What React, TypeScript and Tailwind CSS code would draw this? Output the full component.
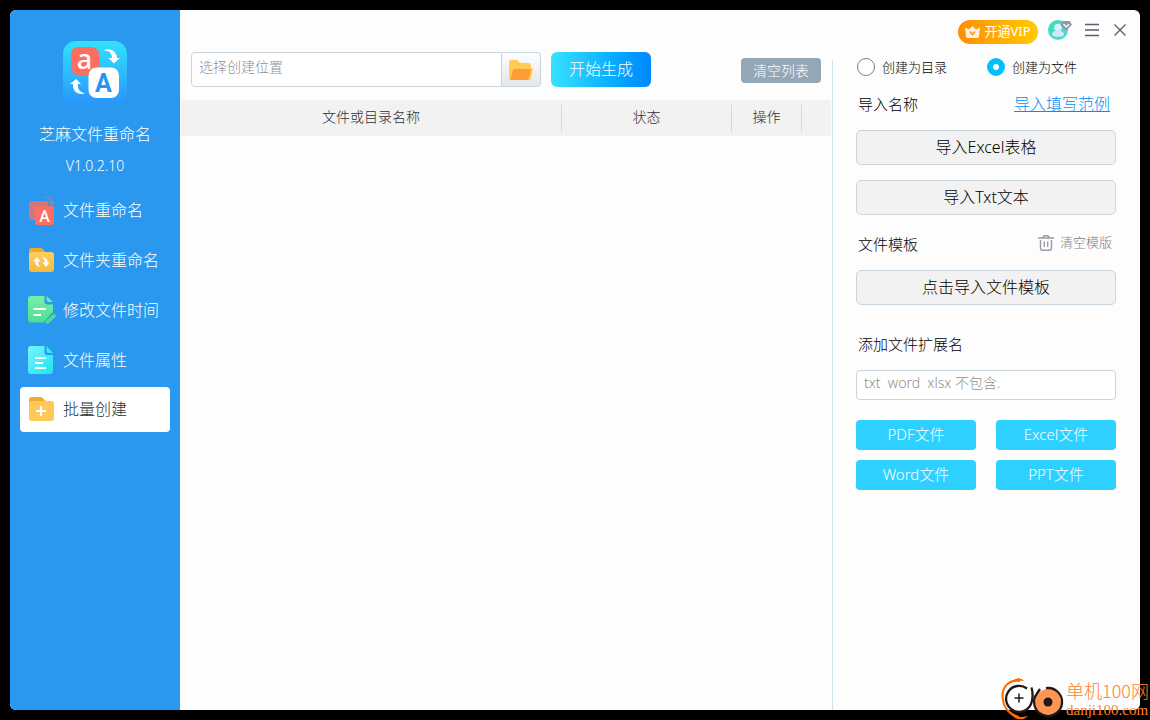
import { useState, type ReactNode } from "react";

function AppLogo() {
  return (
    <svg width="64" height="64" viewBox="0 0 64 64" aria-hidden="true">
      <defs>
        <linearGradient id="logoBg" x1="0" y1="0" x2="0" y2="1">
          <stop offset="0" stopColor="#33e1ff" />
          <stop offset="1" stopColor="#2995fd" />
        </linearGradient>
      </defs>
      <rect width="64" height="64" rx="13" fill="url(#logoBg)" />
      <rect x="8" y="6" width="28" height="28" rx="7" fill="#fd6e5e" />
      <text x="21.500" y="27.500" textAnchor="middle" fontSize="27" fontWeight="500" fontFamily="Noto Sans, sans-serif" fill="#fff">a</text>
      <rect x="25.500" y="26.500" width="30.500" height="30.500" rx="8" fill="#fff" />
      <text x="40.500" y="50.500" textAnchor="middle" fontSize="25" fontWeight="700" fontFamily="Roboto, sans-serif" fill="#2b95ec">A</text>
      <path d="M40.500 9.500C46 6.500 53.500 9 54 17h2.800L51 22.500 45.500 17H49c0-5-3-8-8.500-7.500Z" fill="#fff" />
      <path d="M22 52.200C15.500 54.500 9.500 51 10 43H7l6.200-5L18 43h-3.200c-.3 5 2.200 8.500 7.200 9.200Z" fill="#fff" />
    </svg>
  );
}

function RenameIcon() {
  return (
    <svg width="28" height="30" viewBox="0 0 28 30" aria-hidden="true">
      <rect x="1" y="6" width="19" height="19" rx="2" fill="#d2757f" />
      <path d="M14 3.500C18-.5 24.500 1.500 25 7h2l-3.500 4L20 7h2.500C22 3 18 2 14 3.500Z" fill="#8588ad" />
      <rect x="7" y="11" width="19" height="19" rx="2" fill="#fd6e5e" />
      <text x="16.500" y="26.500" textAnchor="middle" fontSize="16" fontWeight="500" fontFamily="Roboto, sans-serif" fill="#fff">A</text>
    </svg>
  );
}

function FolderRenameIcon() {
  return (
    <svg width="28" height="26" viewBox="0 0 28 26" aria-hidden="true">
      <defs>
        <linearGradient id="folderBg" x1="0" y1="0" x2="0" y2="1">
          <stop offset="0" stopColor="#ffcd60" />
          <stop offset="1" stopColor="#f6b93b" />
        </linearGradient>
      </defs>
      <path d="M1 8V3.500A2.500 2.500 0 0 1 3.500 1h9c3 0 3.500 4 6 4v4Z" fill="#f0a92b" />
      <rect x="1" y="5" width="25" height="20" rx="3" fill="url(#folderBg)" />
      <path d="M12.500 20C8.500 19.500 7 17.500 7.300 14.500H5l4-4.500 3.500 4.500h-2.400c0 2.500.6 4 2.400 5.500ZM14 10c4 .5 5.700 2.500 5.500 5.500h2.200L18 20l-3.700-4.500h2.400c0-2.500-.9-4-2.700-5.500Z" fill="#fff" />
    </svg>
  );
}

function TimeIcon() {
  return (
    <svg width="30" height="30" viewBox="0 0 30 30" aria-hidden="true">
      <defs>
        <linearGradient id="timeBg" x1="0" y1="0" x2="0" y2="1">
          <stop offset="0" stopColor="#78efae" />
          <stop offset="1" stopColor="#4cde93" />
        </linearGradient>
      </defs>
      <path d="M3 1h13.500v5.500a3 3 0 0 0 3 3H25V17l-9.500 10.500H3a3 3 0 0 1-3-3V4a3 3 0 0 1 3-3Z" fill="url(#timeBg)" />
      <path d="M18.500 1 25 7h-4.500a2 2 0 0 1-2-2Z" fill="#6ceaa6" />
      <path d="m18 25.500 8-7 2.500 2.500-8 7.500h-3Z" fill="#4ddc90" />
      <path d="M5.500 14H18M5.500 20H13" stroke="#fff" strokeWidth="2" />
    </svg>
  );
}

function PropertyIcon() {
  return (
    <svg width="28" height="30" viewBox="0 0 28 30" aria-hidden="true">
      <defs>
        <linearGradient id="propBg" x1="0" y1="0" x2="1" y2="1">
          <stop offset="0" stopColor="#7df1ff" />
          <stop offset="1" stopColor="#1ae5f2" />
        </linearGradient>
      </defs>
      <path d="M3 1h13.500v6a3 3 0 0 0 3 3H25v16a3 3 0 0 1-3 3H3a3 3 0 0 1-3-3V4a3 3 0 0 1 3-3Z" fill="url(#propBg)" />
      <path d="M18.500 1 25 8h-4.500a2 2 0 0 1-2-2Z" fill="#3ce9f8" />
      <path d="M7 13h11M7 18h8M7 23h11" stroke="#fff" strokeWidth="2" />
    </svg>
  );
}

function CreateIcon() {
  return (
    <svg width="28" height="26" viewBox="0 0 28 26" aria-hidden="true">
      <path d="M1 8V3.500A2.500 2.500 0 0 1 3.500 1h9c3 0 3.500 4 6 4v4Z" fill="#eeab2e" />
      <rect x="1" y="5" width="25" height="20" rx="3" fill="#ffc957" />
      <path d="M13 10v10M8 15h10" stroke="#fff" strokeWidth="2.200" />
    </svg>
  );
}

function OpenFolderIcon() {
  return (
    <svg width="24" height="22" viewBox="0 0 24 22" aria-hidden="true">
      <path d="M0 3.500A2.500 2.500 0 0 1 2.500 1h5c2 0 2 3 4.500 3h7a3 3 0 0 1 3 3v12a2 2 0 0 1-2 2H2a2 2 0 0 1-2-2Z" fill="#ffca55" />
      <path d="M20 9h2.500c1.200 0 1.600 1 1.300 2L21 20Z" fill="#ffca55" />
      <path d="M6 10h14.500c1.200 0 1.700.9 1.400 2l-2.300 7.500c-.3 1-1 1.500-2 1.500H3c-1.500 0-1.800-.8-1.400-2L4 11.500C4.400 10.500 5 10 6 10Z" fill="#ff9c33" />
    </svg>
  );
}

function CrownIcon() {
  return (
    <svg width="15" height="12" viewBox="0 0 15 12" aria-hidden="true">
      <path d="M0 1.500 4 3.500 7.500 0 11 3.500l4-2-1 9c-.1 1-.5 1.500-1.500 1.500h-10C1.500 12 1.100 11.500 1 10.500Z" fill="#ffeeda" />
      <path d="m5 5.500 2.500 3 2.500-3" fill="none" stroke="#ff9a0b" strokeWidth="1.500" />
    </svg>
  );
}

function AvatarIcon() {
  return (
    <svg width="24" height="20" viewBox="0 0 24 20" aria-hidden="true">
      <defs>
        <linearGradient id="avatarBg" x1="0" y1="0" x2="1" y2="1">
          <stop offset="0" stopColor="#36dfae" />
          <stop offset="1" stopColor="#56d8d8" />
        </linearGradient>
      </defs>
      <circle cx="10" cy="10" r="10" fill="url(#avatarBg)" />
      <circle cx="10" cy="7.500" r="3.800" fill="#d9effc" />
      <path d="M4 15c0-3 2-4.500 6-4.500s6 1.500 6 4.500c-2 2.500-10 2.500-12 0Z" fill="#d0e6fb" />
      <path d="M14.500 1h7L24 4.500 18.200 11 12.500 4.500Z" fill="#9295a8" />
      <path d="m15.500 4 2.800 3 2.800-3" fill="none" stroke="#fff" strokeWidth="1.300" />
    </svg>
  );
}

function TrashIcon() {
  return (
    <svg width="16" height="16" viewBox="0 0 16 16" fill="none" stroke="#9a9ca5" strokeWidth="1.400" aria-hidden="true">
      <path d="M0 3h16M4.800 3c.2-1.500 1-2.300 2-2.300h2.400c1 0 1.800.8 2 2.300M2.500 5v8c0 1.500.8 2.300 2 2.300h7c1.200 0 2-.8 2-2.300V5M6.300 6.500v5.500M9.700 6.500v5.500" />
    </svg>
  );
}

function SiteMark() {
  return (
    <div className="pointer-events-none absolute right-0 bottom-0 flex items-start">
      <svg width="65" height="42" viewBox="0 0 65 42" fill="none" aria-hidden="true">
        <circle cx="19" cy="20" r="13.500" fill="#fff" />
        <path d="M20 3C7 1 1 11 3 22c1 8 7 15 16 17" stroke="#ff6a00" strokeWidth="2" />
        <path d="M8 7C13-1 21-1 24 3c-6-1-11 0-16 4ZM9 34c4 5 11 6 19 4-5 5-13 5-19-4Z" fill="#ff6a00" />
        <path d="M27 10.500A13 13 0 1 0 31 26C33 22 33 14 31.500 9.500" stroke="#231815" strokeWidth="2.300" />
        <path d="M14.500 20h9M19 15.500v9" stroke="#231815" strokeWidth="1.500" />
        <circle cx="48" cy="24" r="13" fill="#ff9552" />
        <circle cx="48" cy="24" r="4.500" fill="#231815" />
        <path d="M46 10.200A14 14 0 1 1 37 15.500l3-4.500" stroke="#231815" strokeWidth="2.300" />
      </svg>
      <div className="flex w-[85px] flex-col pl-px text-[#ff8330]">
        <span className="font-['Noto_Sans_CJK_SC',sans-serif] text-lg leading-6 whitespace-nowrap">单机100网</span>
        <span className="font-['Liberation_Serif',serif] text-[15px] leading-[16px]">danji100.com</span>
      </div>
    </div>
  );
}

const navItems: { label: string; icon: ReactNode }[] = [
  { label: "文件重命名", icon: <RenameIcon /> },
  { label: "文件夹重命名", icon: <FolderRenameIcon /> },
  { label: "修改文件时间", icon: <TimeIcon /> },
  { label: "文件属性", icon: <PropertyIcon /> },
  { label: "批量创建", icon: <CreateIcon /> },
];

function Sidebar() {
  const [active, setActive] = useState("批量创建");
  return (
    <aside className="flex w-[170px] shrink-0 flex-col items-center bg-[#2b98ef] pt-[31px] text-white">
      <AppLogo />
      <h1 className="mt-[17px] text-base leading-6">芝麻文件重命名</h1>
      <p className="mt-2 text-sm leading-6">V1.0.2.10</p>
      <nav className="mt-[9px] flex w-full flex-col gap-[5px] px-[10px]">
        {navItems.map((item) => (
          <button
            key={item.label}
            type="button"
            onClick={() => setActive(item.label)}
            className={
              item.label === active
                ? "flex h-[45px] items-center rounded bg-white pb-[2px] pl-2 text-base text-[#2c2f36]"
                : "flex h-[45px] items-center rounded pl-2 text-base text-white"
            }
          >
            <span className="flex w-[35px] shrink-0 items-center">{item.icon}</span>
            {item.label}
          </button>
        ))}
      </nav>
    </aside>
  );
}

function TitleBar() {
  return (
    <header className="flex h-10 shrink-0 items-center justify-end pr-[14px]">
      <button type="button" className="mt-1 flex h-6 w-20 items-center justify-center gap-1 rounded-full bg-linear-to-r from-[#ff8c05] to-[#ffcb00] text-[13px] font-normal whitespace-nowrap text-white">
        <CrownIcon />
        开通VIP
      </button>
      <button type="button" aria-label="用户" className="ml-[10px]">
        <AvatarIcon />
      </button>
      <button type="button" aria-label="菜单" className="ml-[13px]">
        <svg width="14" height="14" viewBox="0 0 14 14" stroke="#5b5e6b" strokeWidth="1.300" aria-hidden="true">
          <path d="M0 1.500h14M0 7h14M0 12.500h14" />
        </svg>
      </button>
      <button type="button" aria-label="关闭" className="ml-[15px]">
        <svg width="12" height="12" viewBox="0 0 12 12" stroke="#5b5e6b" strokeWidth="1.300" aria-hidden="true">
          <path d="m.5.500 11 11M11.500.500l-11 11" />
        </svg>
      </button>
    </header>
  );
}

function HeadCell({ label, width }: { label: string; width: string }) {
  return (
    <th className={`${width} p-0 font-light`}>
      <span className="flex h-[27px] items-center justify-center border-r border-[#d5d7da] pb-[2px]">{label}</span>
    </th>
  );
}

function FileList() {
  return (
    <section className="flex min-w-0 flex-1 flex-col pt-[2px]">
      <div className="flex items-center pr-[11px] pl-[11px]">
        <input
          type="text"
          aria-label="选择创建位置"
          placeholder="选择创建位置"
          className="h-[35px] min-w-0 flex-1 rounded-l border border-[#c8d5de] bg-white px-[7px] pb-[6px] text-sm text-[#333] outline-none placeholder:text-[#909090]"
        />
        <button type="button" aria-label="浏览" className="flex h-[35px] w-[39px] items-center justify-center rounded-r border border-l-0 border-[#c8d5de] bg-linear-to-b from-[#fdfdfd] to-[#e4e6e8]">
          <OpenFolderIcon />
        </button>
        <button type="button" className="ml-[10px] h-[35px] w-[100px] rounded-md bg-linear-to-r from-[#36e2ff] to-[#0088ff] pb-px text-base text-white">
          开始生成
        </button>
        <button type="button" className="mt-[2px] ml-[90px] h-[25px] w-20 rounded bg-[#94a7b7] text-sm text-white">
          清空列表
        </button>
      </div>
      <div className="mt-[13px] px-px">
        <table className="w-full table-fixed border-collapse bg-[#f2f2f2] text-sm text-[#2c2f36]">
          <thead>
            <tr className="h-9">
              <HeadCell label="文件或目录名称" width="w-auto" />
              <HeadCell label="状态" width="w-[170px]" />
              <HeadCell label="操作" width="w-[70px]" />
              <th className="w-[29px] p-0" aria-label="滚动条" />
            </tr>
          </thead>
          <tbody />
        </table>
      </div>
    </section>
  );
}

const wideButton = "h-[35px] w-full rounded-[5px] border border-[#c8d5de] bg-[#f2f2f2] pb-px text-base text-black";
const radioInput =
  "m-0 size-[18px] shrink-0 appearance-none rounded-full border border-[#7c7f92] bg-white checked:border-[6px] checked:border-[#00bfff]";

function OptionsPanel() {
  const [kind, setKind] = useState("file");
  const [extension, setExtension] = useState("");
  const types = [
    { label: "PDF文件", value: "pdf" },
    { label: "Excel文件", value: "xlsx" },
    { label: "Word文件", value: "docx" },
    { label: "PPT文件", value: "pptx" },
  ];
  return (
    <section className="mt-[10px] w-[308px] shrink-0 border-l border-[#cfe3ec] pr-6 pl-[23px] text-[15px] text-black">
      <div className="grid h-[14px] grid-cols-2 grid-rows-1 items-center text-[13px]">
        <label className="flex items-center gap-[7px] pl-px leading-[18px]">
          <input type="radio" name="kind" checked={kind === "dir"} onChange={() => setKind("dir")} className={radioInput} />
          创建为目录
        </label>
        <label className="flex items-center gap-[7px] pl-px leading-[18px]">
          <input type="radio" name="kind" checked={kind === "file"} onChange={() => setKind("file")} className={radioInput} />
          创建为文件
        </label>
      </div>
      <div className="mt-[18px] flex h-6 items-center justify-between pr-[6px] pl-[2px]">
        <span>导入名称</span>
        <a href="#example" className="text-base text-[#0090f5] underline">导入填写范例</a>
      </div>
      <button type="button" className={`${wideButton} mt-[14px]`}>导入Excel表格</button>
      <button type="button" className={`${wideButton} mt-[15px]`}>导入Txt文本</button>
      <div className="mt-[17px] flex h-6 items-center justify-between pr-1 pl-[2px]">
        <span>文件模板</span>
        <button type="button" className="flex items-center gap-[6px] pb-[2px] text-[13px] text-[#7c7e88]">
          <TrashIcon />
          清空模版
        </button>
      </div>
      <button type="button" className={`${wideButton} mt-[14px]`}>点击导入文件模板</button>
      <label htmlFor="extension" className="mt-[27px] flex h-6 items-center pl-[2px]">添加文件扩展名</label>
      <input
        id="extension"
        type="text"
        value={extension}
        onChange={(e) => setExtension(e.target.value)}
        placeholder="txt  word  xlsx 不包含."
        className="mt-[14px] h-[30px] w-full rounded border border-[#c8d5de] bg-white px-[7px] pb-[6px] text-sm outline-none placeholder:whitespace-pre placeholder:text-[#909090]"
      />
      <div className="mt-5 grid grid-cols-2 gap-x-5 gap-y-[10px]">
        {types.map((t) => (
          <button key={t.value} type="button" onClick={() => setExtension(t.value)} className="h-[30px] rounded bg-[#2dd0ff] pb-[2px] text-[15px] text-white">
            {t.label}
          </button>
        ))}
      </div>
    </section>
  );
}

export default function App() {
  return (
    <div className="relative flex min-h-screen bg-black p-[10px] font-['Noto_Sans','Noto_Sans_CJK_SC',sans-serif] font-light">
      <div className="flex flex-1 overflow-hidden rounded-md bg-[#fdfdfd]">
        <Sidebar />
        <main className="flex min-w-0 flex-1 flex-col">
          <TitleBar />
          <div className="flex flex-1">
            <FileList />
            <OptionsPanel />
          </div>
        </main>
      </div>
      <SiteMark />
    </div>
  );
}
